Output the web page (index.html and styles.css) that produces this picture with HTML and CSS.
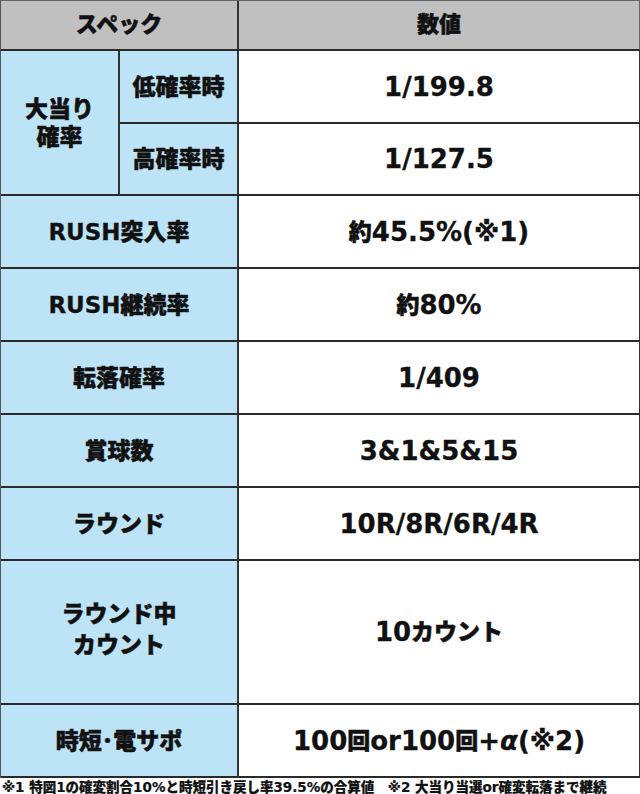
FILE: index.html
```html
<!DOCTYPE html>
<html lang="ja">
<head>
<meta charset="utf-8">
<title>スペック</title>
<link rel="stylesheet" href="styles.css">
</head>
<body>
<div class="spec">
  <div class="cell head span2">スペック</div>
  <div class="cell head last">数値</div>

  <div class="cell label rows2">大当り<br>確率</div>
  <div class="cell label">低確率時</div>
  <div class="cell value"><span class="en">1/199.8</span></div>
  <div class="cell label">高確率時</div>
  <div class="cell value"><span class="en">1/127.5</span></div>

  <div class="cell label span2"><span class="en">RUSH</span>突入率</div>
  <div class="cell value">約<span class="en">45.5%(※1)</span></div>

  <div class="cell label span2"><span class="en">RUSH</span>継続率</div>
  <div class="cell value">約<span class="en">80%</span></div>

  <div class="cell label span2">転落確率</div>
  <div class="cell value"><span class="en">1/409</span></div>

  <div class="cell label span2">賞球数</div>
  <div class="cell value"><span class="en">3&amp;1&amp;5&amp;15</span></div>

  <div class="cell label span2">ラウンド</div>
  <div class="cell value"><span class="en">10R/8R/6R/4R</span></div>

  <div class="cell label span2 tall">ラウンド中<br>カウント</div>
  <div class="cell value tall"><span class="en">10</span>カウント</div>

  <div class="cell label span2">時短･電サポ</div>
  <div class="cell value"><span class="en">100</span>回<span class="en">or100</span>回<span class="en">+<i>α</i>(※2)</span></div>
</div>
<p class="note">※1 特図1の確変割合10%と時短引き戻し率39.5%の合算値　※2 大当り当選or確変転落まで継続</p>
</body>
</html>
```
FILE: styles.css
```css
* { box-sizing: border-box; }

html, body {
  margin: 0;
  padding: 0;
  background: #ffffff;
}

body {
  width: 640px;
  font-family: "DejaVu Sans", "Noto Sans CJK JP", sans-serif;
  font-weight: 700;
  color: #111111;
}

.spec {
  display: grid;
  width: 640px;
  grid-template-columns: 119px 119px 402px;
  grid-template-rows: 50px 73px 72px 73px 73px 73px 73px 73px 144px 73px;
  border-top: 1px solid #666666;
  border-left: 1px solid #555555;
}

.cell {
  display: flex;
  align-items: center;
  justify-content: center;
  text-align: center;
  border-right: 2px solid #333333;
  border-bottom: 2px solid #2a2a2a;
  font-family: "DejaVu Sans", "Noto Sans CJK JP", sans-serif;
  font-weight: 900;
  font-size: 23px;
  line-height: 28px;
  -webkit-text-stroke: 0.5px #111111;
}

.span2 { grid-column: span 2; }
.rows2 { grid-row: span 2; }

.head {
  background: #c0c0c0;
  font-size: 22px;
}

.head.last {
  border-right-color: #666666;
}

.label {
  background: #bde3f7;
}

.label.tall {
  line-height: 31px;
  padding-bottom: 4px;
}

.value {
  background: #ffffff;
  font-size: 23px;
}

.en {
  font-family: "DejaVu Sans", sans-serif;
  font-weight: 700;
  -webkit-text-stroke: 0.3px #111111;
}

.label .en { font-size: 23px; }
.value .en { font-size: 26px; }

.en i {
  font-style: italic;
}

.note {
  margin: 0;
  padding: 1px 0 0 2px;
  font-family: "DejaVu Sans", "Noto Sans CJK JP", sans-serif;
  font-weight: 900;
  font-size: 13.5px;
  line-height: 16px;
  white-space: nowrap;
  color: #111111;
  -webkit-text-stroke: 0.2px #111111;
}
```
